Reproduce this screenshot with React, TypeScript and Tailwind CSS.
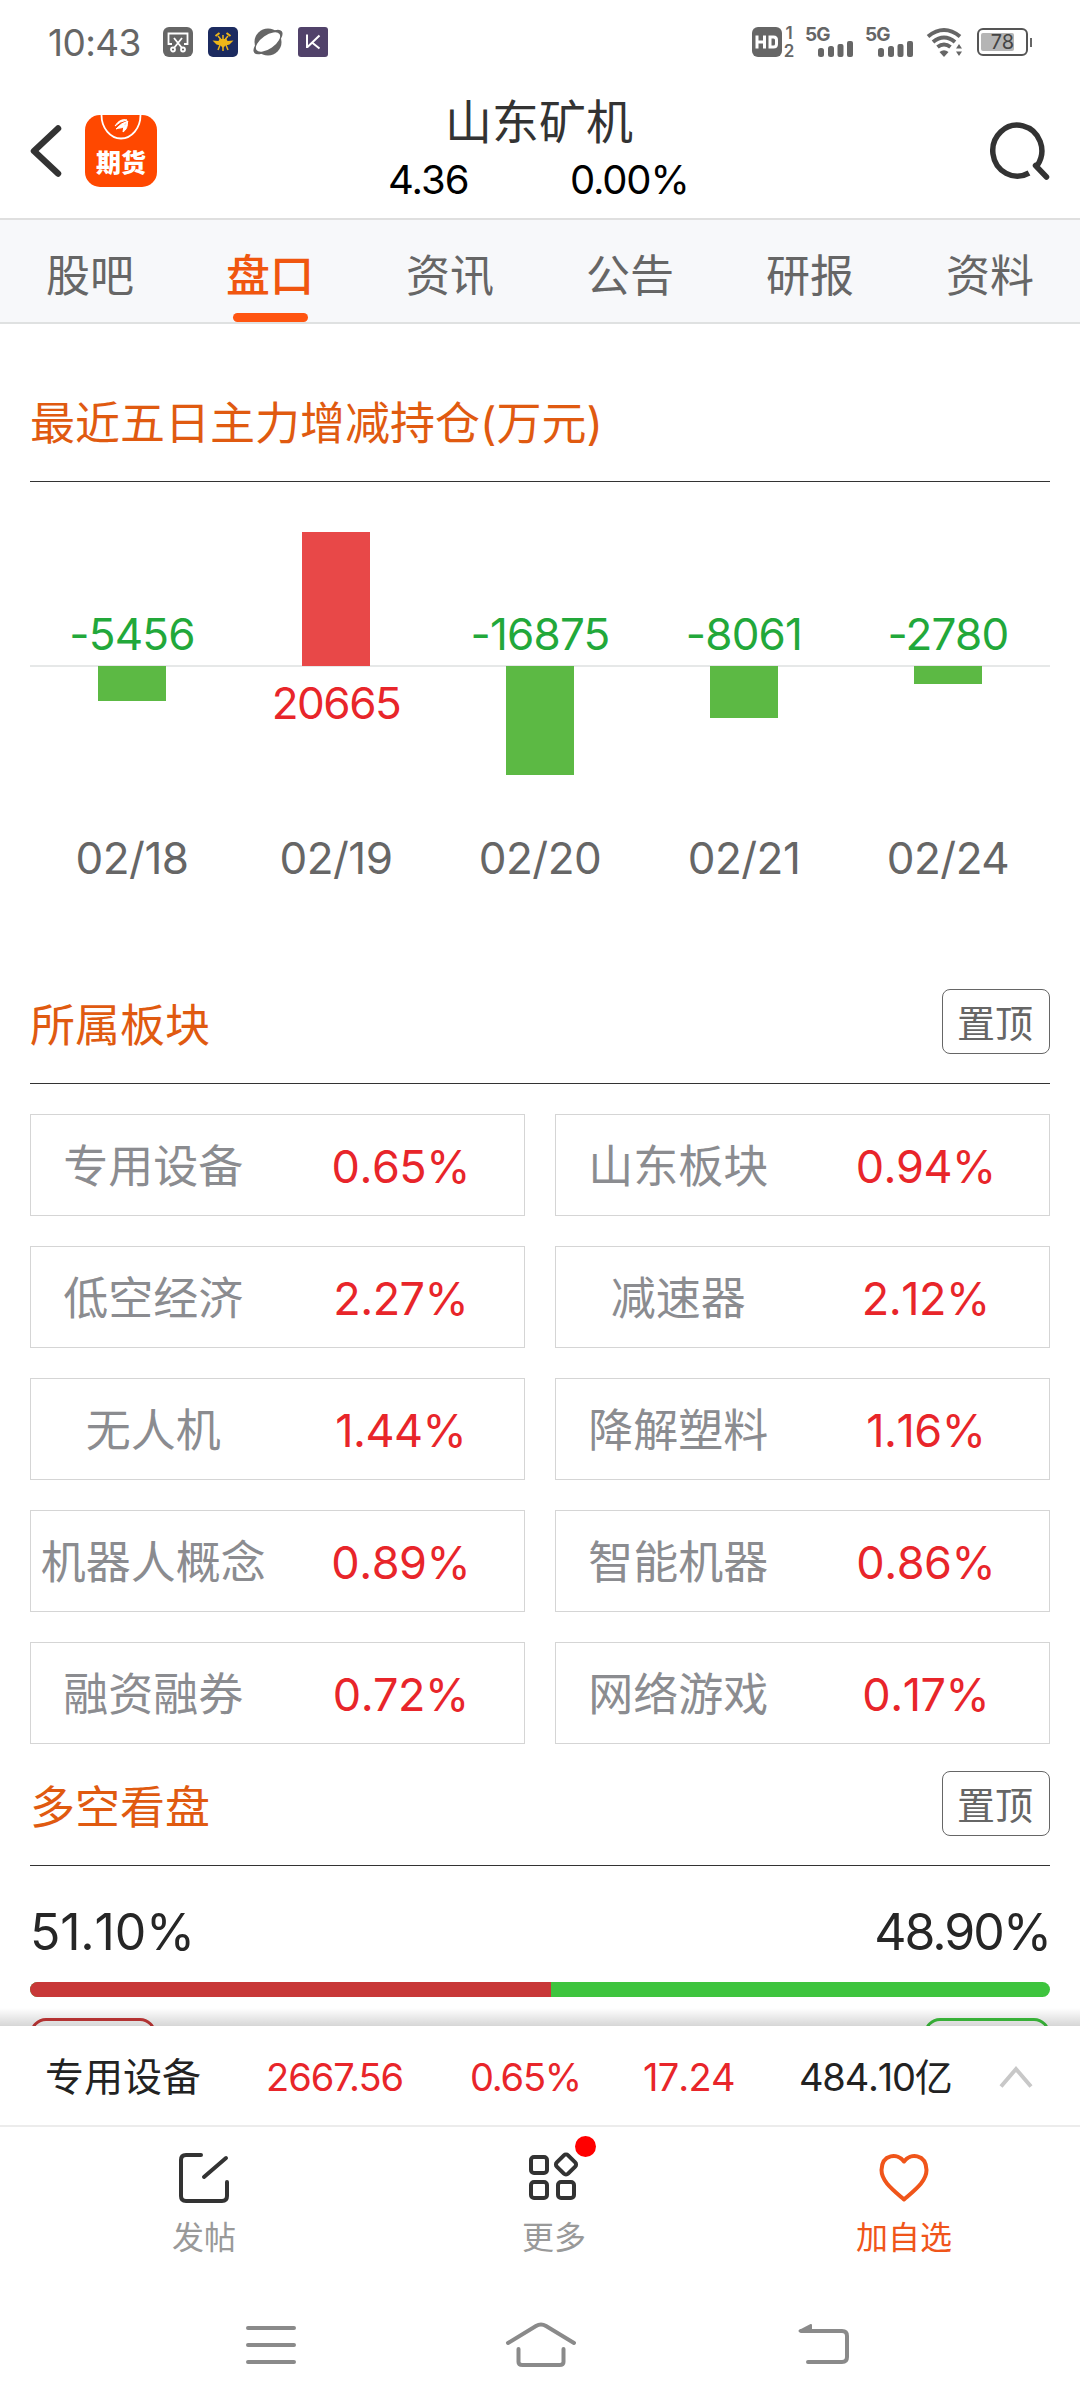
const tabs = ['股吧', '盘口', '资讯', '公告', '研报', '资料'];

const flows = [
    { date: '02/18', value: -5456, size: 35 },
    { date: '02/19', value: 20665, size: 134 },
    { date: '02/20', value: -16875, size: 109 },
    { date: '02/21', value: -8061, size: 52 },
    { date: '02/24', value: -2780, size: 18 },
];

const sectors = [
    { name: '专用设备', change: '0.65%' },
    { name: '山东板块', change: '0.94%' },
    { name: '低空经济', change: '2.27%' },
    { name: '减速器', change: '2.12%' },
    { name: '无人机', change: '1.44%' },
    { name: '降解塑料', change: '1.16%' },
    { name: '机器人概念', change: '0.89%' },
    { name: '智能机器', change: '0.86%' },
    { name: '融资融券', change: '0.72%' },
    { name: '网络游戏', change: '0.17%' },
];

const Signal = () => (
    <div className="relative w-12 h-[30px]">
        <span className="absolute -left-[1px] -top-[2px] text-[19px] leading-[20px] font-bold tracking-[-1px]">5G</span>
        <svg className="block" width="48" height="30" viewBox="0 0 48 30" fill="#666">
            <rect x="12" y="21" width="6" height="9" rx="2.5" />
            <rect x="22" y="19" width="6" height="11" rx="2.5" />
            <rect x="31.500" y="17" width="6" height="13" rx="2" />
            <rect x="41" y="14" width="6" height="16" rx="2" />
        </svg>
    </div>
);

const StatusBar = () => (
    <div className="flex items-center h-[84px] pl-12 pr-12 text-[#666]">
        <span className="w-[115px] text-[37px] leading-none tracking-[-0.6px]">10:43</span>
        <div className="flex gap-[15px]">
            <svg width="30" height="30" viewBox="0 0 30 30" fill="none">
                <rect width="30" height="30" rx="6" fill="#666" />
                <path d="M9 17H5.500V6.500h19V17H21M11 11l8 10M19 11l-8 10" stroke="#fff" strokeWidth="1.800" />
                <circle cx="10" cy="22.500" r="2" stroke="#fff" strokeWidth="1.800" />
                <circle cx="20" cy="22.500" r="2" stroke="#fff" strokeWidth="1.800" />
            </svg>
            <svg width="30" height="30" viewBox="0 0 30 30">
                <rect width="30" height="30" rx="5" fill="#1c2b60" />
                <path d="M4.500 13.500l6 .5 1-2h7l1 2 6-.5-4 4-4 1-2 2h-1l-2-2-4-1z" fill="#eeb618" />
                <path d="M15 8v16M10 9l5 6 5-6M12 18l-2 5M18 18l2 5" stroke="#eeb618" strokeWidth="1.500" fill="none" />
                <path d="M7.500 9l4-3M22.500 9l-4-3" stroke="#eeb618" strokeWidth="2" fill="none" />
            </svg>
            <svg width="30" height="30" viewBox="0 0 30 30">
                <circle cx="15" cy="15" r="13.500" fill="#666" />
                <ellipse cx="15" cy="15" rx="17.500" ry="7.500" transform="rotate(-38 15 15)" fill="#666" />
                <ellipse cx="15" cy="15" rx="14" ry="6.800" transform="rotate(-35 15 15)" fill="#fff" />
            </svg>
            <svg width="30" height="30" viewBox="0 0 30 30" fill="none">
                <rect width="30" height="30" rx="3" fill="#51426a" />
                <path d="M9 7.500V21M21.500 8.500L9.500 20M14 15.500l7.500 6" stroke="#fff" strokeWidth="2" />
            </svg>
        </div>
        <div className="flex items-center ml-auto">
            <svg width="30" height="30" viewBox="0 0 30 30">
                <rect width="30" height="30" rx="6" fill="#666" />
                <path d="M5 8.500v13M12.500 8.500v13M5 15h7.500M18 10h3.500q3 0 3 3v4q0 3-3 3H18z" stroke="#fff" strokeWidth="3" fill="none" />
            </svg>
            <div className="flex flex-col items-center w-[14px] mr-[10px] text-[17px] leading-[18px] font-semibold">
                <span>1</span>
                <span>2</span>
            </div>
            <Signal />
            <div className="w-3" />
            <Signal />
            <svg className="ml-[12px] mr-[14px]" width="37" height="30" viewBox="0 0 37 30" fill="none">
                <path d="M2 9.500Q18 -3.500 34 9.500M7 15Q18 6 29 15M11.500 20Q18 15 24.500 20" stroke="#666" strokeWidth="4" />
                <path d="M13.500 25q4.500-3.500 9 0L18 30z" fill="#666" />
                <path d="M30 21.500l3-4.500 3 4.500zM30 24.500l3 4.500 3-4.500z" fill="#666" />
            </svg>
            <div className="flex items-center">
                <div className="relative flex items-center justify-center w-[51px] h-[28px] border-2 border-[#555] rounded-md text-[20px] leading-none text-[#444]">
                    <div className="absolute left-[2px] top-[3px] w-[33px] h-[18px] rounded-xs bg-[#b5b5b5]" />
                    <span className="relative">78</span>
                </div>
                <div className="ml-[2px] w-[2px] h-[9px] bg-[#666]" />
            </div>
        </div>
    </div>
);

const Header = () => (
    <div className="flex h-[136px] border-b-2 border-[#dfdfdf] px-[30px]">
        <svg className="mt-10" width="34" height="54" viewBox="0 0 34 54" fill="none">
            <path d="M28 4.500L4 27l24 22.500" stroke="#333" strokeWidth="6.500" strokeLinecap="round" strokeLinejoin="round" />
        </svg>
        <div className="mt-[31px] ml-[21px] size-[72px] rounded-[15px] bg-[#ff4800] overflow-hidden">
            <svg className="block" width="72" height="30" viewBox="0 0 72 30" fill="none">
                <path d="M16.500 0a19.500 23.500 0 0 0 39 0" stroke="#fff" strokeWidth="1.800" />
                <path d="M30 11q5-8 12-6q-7 1-12 6M31 14q5-6 12-8q-3 7-8 7q-2 0-4 1M38 17q5-3 4.500-11q-5 5-4.500 11" fill="#fff" stroke="#fff" strokeWidth="1" />
            </svg>
            <div className="text-center text-[25px] leading-[36px] font-black text-white">期货</div>
        </div>
        <div className="flex-1 pt-[13px]">
            <div className="ml-[288px] w-[190px] text-[47px] leading-[50px] text-[#333] whitespace-nowrap">山东矿机</div>
            <div className="flex pl-[231px] mt-[9px] text-[40px] leading-[48px] text-black whitespace-nowrap">
                <span className="w-[182px] tracking-[-1px]">4.36</span>
                <span className="tracking-[-1.2px]">0.00%</span>
            </div>
        </div>
        <svg className="mt-[35px]" width="62" height="62" viewBox="0 0 62 62" fill="none">
            <path d="M41 54A24.500 25.500 0 1 1 49.500 46" stroke="#333" strokeWidth="5.500" />
            <path d="M47.500 46.500l11 11.500" stroke="#333" strokeWidth="5.500" strokeLinecap="round" />
        </svg>
    </div>
);

const SectionTitle = ({ title, pinned }: { title: string; pinned?: boolean }) => (
    <div className="flex items-center justify-between h-[120px] border-b border-[#333]">
        <span className="pt-[4px] text-[45px] leading-none text-[#e05a10]">{title}</span>
        {pinned && (
            <button className="flex items-center justify-center w-[108px] h-[65px] mt-[-4px] pt-[3px] pr-[2px] border border-[#666] rounded-lg text-[38px] leading-none text-[#666]">
                置顶
            </button>
        )}
    </div>
);

const FlowChart = () => (
    <div className="relative h-[420px]">
        <div className="absolute inset-x-0 top-[183px] h-[2px] bg-[#e6e8e8]" />
        <div className="relative grid grid-cols-5">
            {flows.map(({ date, value, size }) => (
                <div key={date} className="flex flex-col items-center text-[44px] leading-[50px]">
                    <div className="flex flex-col items-center justify-end h-[184px]">
                        {value > 0 ? (
                            <div className="w-[68px] bg-[#e84848]" style={{ height: size }} />
                        ) : (
                            <div className="mb-[7px] tracking-[-0.8px] text-[#22a83a]">{value}</div>
                        )}
                    </div>
                    <div className="flex flex-col items-center h-[167px]">
                        {value > 0 ? (
                            <div className="mt-[12px] tracking-[-1.5px] text-[#e8252a]">{value}</div>
                        ) : (
                            <div className="w-[68px] bg-[#5cb944]" style={{ height: size }} />
                        )}
                    </div>
                    <div className="text-[#666] tracking-[-0.5px]">{date}</div>
                </div>
            ))}
        </div>
    </div>
);

const SectorGrid = () => (
    <div className="grid grid-cols-2 gap-[30px] mt-[30px]">
        {sectors.map((s) => (
            <div key={s.name} className="grid grid-cols-2 items-center h-[102px] pt-[3px] border border-[#d5d5d5] text-[45px] leading-none text-center whitespace-nowrap">
                <span className="-ml-[2px] text-[#8b8c90]">{s.name}</span>
                <span className="text-[#e8252a] tracking-[-0.5px] [font-kerning:none]">{s.change}</span>
            </div>
        ))}
    </div>
);

const IndexBar = () => (
    <div className="relative flex items-center h-[101px] pt-[2px] border-b-2 border-[#ececec] bg-white text-[38px] leading-none text-[#e8252a] whitespace-nowrap">
        <div className="absolute inset-x-0 bottom-full h-[18px] bg-linear-to-t from-black/16 to-transparent" />
        <span className="w-[221px] pl-[45px] text-[39px] text-[#222]">专用设备</span>
        <span className="w-[204px] pl-[45px] tracking-[-1px]">2667.56</span>
        <span className="w-[173px] pl-[45px] tracking-[-1.2px]">0.65%</span>
        <span className="w-[156px] pl-[45px] tracking-[-0.8px] [font-kerning:none]">17.24</span>
        <span className="w-[245px] pl-[45px] tracking-[-1.2px] text-[#222] [font-kerning:none]">484.10亿</span>
        <svg width="34" height="24" viewBox="0 0 34 24" fill="none">
            <path d="M2 21.500L17 4l15 17.500" stroke="#c8c8c8" strokeWidth="4" />
        </svg>
    </div>
);

const ActionBar = () => (
    <div className="grid grid-cols-[350px_350px_350px] h-[143px] pl-[29px] text-[32px] leading-[40px] text-[#999]">
        <div className="flex flex-col items-center pt-[25px]">
            <svg width="52" height="52" viewBox="0 0 52 52" fill="none" stroke="#333" strokeWidth="4" strokeLinecap="round">
                <path d="M23 3H8Q3 3 3 8v36q0 5 5 5h36q5 0 5-5V30M48 6L26 25" />
            </svg>
            <span className="mt-[14px]">发帖</span>
        </div>
        <div className="flex flex-col items-center pt-[25px]">
            <div className="relative">
                <svg width="52" height="52" viewBox="0 0 52 52" fill="none" stroke="#333" strokeWidth="4">
                    <rect x="3" y="5" width="16" height="16" rx="3" />
                    <rect x="3" y="30" width="16" height="16" rx="3" />
                    <rect x="30" y="30" width="16" height="16" rx="3" />
                    <rect x="30" y="4.500" width="16" height="16" rx="3" transform="rotate(45 38 12.500)" />
                </svg>
                <div className="absolute left-[47px] -top-4 size-[21px] rounded-full bg-[#ff0000]" />
            </div>
            <span className="mt-[14px]">更多</span>
        </div>
        <div className="flex flex-col items-center pt-[25px] text-[#f0551a]">
            <svg width="52" height="52" viewBox="0 0 52 52" fill="none" stroke="#f0551a" strokeWidth="4" strokeLinejoin="round">
                <path d="M26 9.500C20 1 4 1.500 3.500 18C3.500 29 14 37 26 47.500C38 37 48.500 29 48.500 18C48 1.500 32 1 26 9.500z" />
            </svg>
            <span className="mt-[14px]">加自选</span>
        </div>
    </div>
);

const NavBar = () => (
    <div className="flex items-center h-[138px] pt-[11px] pl-[245px]">
        <svg width="52" height="46" viewBox="0 0 52 46" fill="none" stroke="#8a8a8a" strokeWidth="4" strokeLinecap="round">
            <path d="M3 6h46M3 23h46M3 40h46" />
        </svg>
        <svg className="ml-[207px]" width="74" height="46" viewBox="0 0 74 46" fill="none" stroke="#8a8a8a" strokeWidth="4" strokeLinecap="round" strokeLinejoin="round">
            <path d="M4 21L32 4q5-3 10 0L70 21M14.500 27v13q0 3 4 3h37q4 0 4-3V27" />
        </svg>
        <svg className="ml-[219px]" width="54" height="46" viewBox="0 0 54 46" fill="none" stroke="#8a8a8a" strokeWidth="4" strokeLinecap="round">
            <path d="M4 9h41q5 0 5 5v21q0 5-5 5H11" />
            <path d="M2.500 9L14 3v6z" fill="#8a8a8a" strokeWidth="2" strokeLinejoin="round" />
        </svg>
    </div>
);

const App = () => {
    return (
        <div className="flex flex-col w-[1080px] h-[2408px] overflow-hidden bg-white font-['Inter','Noto_Sans_CJK_SC',sans-serif]">
            <StatusBar />
            <Header />
            <div className="grid grid-cols-6 h-[104px] border-b-2 border-[#dfe1e1] bg-[#f7f8fa] text-[44px] text-[#666]">
                {tabs.map((tab) => (
                    <div key={tab} className="flex flex-col items-center pt-[31px]">
                        <span className={tab === '盘口' ? 'leading-[50px] text-[#f0560f] font-medium' : 'leading-[50px]'}>{tab}</span>
                        {tab === '盘口' && <div className="mt-[12px] w-[75px] h-[9px] rounded-full bg-[#ff5511]" />}
                    </div>
                ))}
            </div>

            <div className="h-[1702px] px-[30px] pt-[38px] overflow-hidden">
                <SectionTitle title="最近五日主力增减持仓(万元)" />
                <FlowChart />
                <div className="h-[62px]" />
                <SectionTitle title="所属板块" pinned />
                <SectorGrid />
                <div className="h-[2px]" />
                <SectionTitle title="多空看盘" pinned />
                <div className="flex justify-between mt-[36px] text-[50px] leading-[60px] text-[#262626]">
                    <span className="tracking-[-0.2px] [font-kerning:none]">51.10%</span>
                    <span className="tracking-[-2px]">48.90%</span>
                </div>
                <div className="flex mt-5 h-[15px] rounded-full overflow-hidden bg-[#3ec43e]">
                    <div className="w-[51.1%] bg-[#c83838]" />
                </div>
                <div className="flex justify-between mt-[21px]">
                    <div className="w-[126px] h-[56px] border-[3px] border-[#c83838] rounded-2xl" />
                    <div className="w-[126px] h-[56px] border-[3px] border-[#3ec43e] rounded-2xl" />
                </div>
            </div>

            <IndexBar />
            <ActionBar />
            <NavBar />
        </div>
    );
};

export default App;
